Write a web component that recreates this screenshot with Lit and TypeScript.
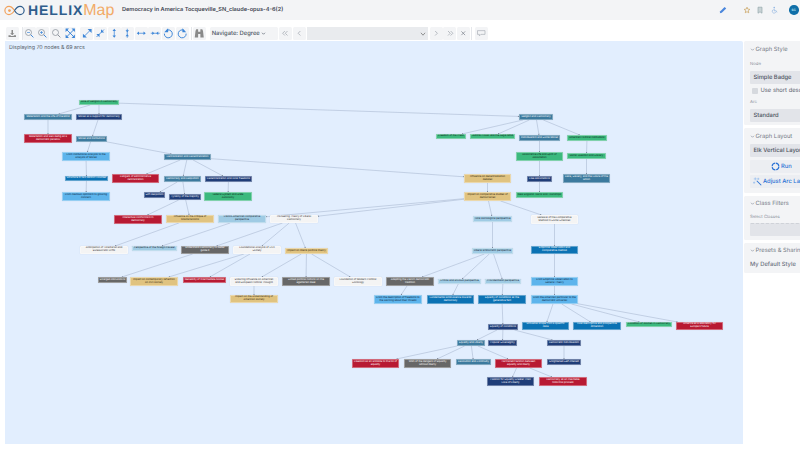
import { LitElement, html, css, svg } from "lit";
import { customElement } from "lit/decorators.js";

type Kind = "g" | "t" | "n" | "r" | "l" | "b" | "a" | "m" | "d" | "w";
type N = [string, number, number, number, number, Kind, string];

const NODES: N[] = [
  ["root", 79, 100, 119, 105, "g", "Role of Religion in Democracy"],
  ["matlife", 24, 114, 72, 120, "t", "Materialism and the Life of the Mind"],
  ["moressup", 76, 114, 122, 120, "n", "Mores as a support for democracy"],
  ["matpar", 24, 134, 72, 143, "r", "Materialism and well-being as a\ndemocratic paradox"],
  ["moresinst", 76, 136, 107, 142, "t", "Mores and Institutions"],
  ["frominst", 62, 152, 110, 161, "l", "From Institutional Analysis to the\nAnalysis of Mores"],
  ["central", 164, 154, 211, 160, "t", "Centralization and Decentralization"],
  ["dangers", 112, 174, 159, 183, "r", "Dangers of administrative\ncentralization"],
  ["despot", 164, 176, 201, 182, "t", "Democracy and Despotism"],
  ["decentral", 205, 176, 252, 182, "n", "Decentralization and local freedoms"],
  ["structure", 65, 176, 108, 181, "b", "Structure in two distinct volumes"],
  ["cautious", 62, 192, 110, 201, "l", "From cautious optimism to growing\nconcern"],
  ["soft", 144, 192, 165, 198, "n", "Soft despotism"],
  ["tyranny", 169, 194, 201, 200, "n", "Tyranny of the majority"],
  ["federal", 204, 192, 252, 201, "g", "Federal System and State\nAutonomy"],
  ["intell", 114, 215, 162, 224, "r", "Intellectual conformism in\ndemocracy"],
  ["critique", 166, 215, 214, 223, "a", "Influence on the critique of\ntotalitarianisms"],
  ["franco", 218, 215, 266, 223, "m", "Franco-American comparative\nperspective"],
  ["pioneer", 270, 215, 318, 223, "w", "Pioneering Theory of Liberal\nDemocracy"],
  ["anticip", 80, 246, 128, 254, "w", "Anticipation of Totalitarian and\nBureaucratic Drifts"],
  ["foreign", 132, 246, 177, 251, "m", "Perspective of the foreign traveler"],
  ["understand", 181, 246, 229, 254, "d", "Understand Democracy to better\nguide it"],
  ["foundational", 233, 246, 281, 254, "w", "Foundational Analysis of Civil\nSociety"],
  ["impliberal", 285, 248, 328, 254, "a", "Impact on liberal political theory"],
  ["enlarged", 98, 277, 127, 283, "d", "Enlarged discussions"],
  ["impcontemp", 130, 277, 178, 286, "a", "Impact on contemporary reflection\non civil society"],
  ["necessity", 183, 277, 226, 283, "r", "Necessity of intermediate bodies"],
  ["enduring", 230, 277, 278, 286, "w", "Enduring Influence on American\nand European Political Thought"],
  ["skilled", 282, 277, 330, 286, "d", "Skilled political notions on the\negalitarian ideal"],
  ["modern", 334, 277, 382, 286, "w", "Foundation of Modern Political\nSociology"],
  ["impunder", 230, 295, 278, 303, "a", "Impact on the understanding of\nAmerican society"],
  ["religion", 519, 114, 553, 120, "t", "Religion and Democracy"],
  ["press", 436, 134, 466, 139, "g", "Freedom of the Press"],
  ["judicial", 470, 134, 515, 139, "g", "Judicial Power and the Legal Mind"],
  ["individ", 519, 135, 560, 141, "t", "Individualism and Social Mores"],
  ["ampol", 567, 135, 607, 141, "g", "American Political Institutions"],
  ["assoc", 516, 152, 563, 161, "g", "Associative Life and Spirit of\nAssociation"],
  ["racial", 567, 153, 606, 159, "g", "Racial Question and Slavery"],
  ["free", 527, 176, 552, 182, "n", "Free associations"],
  ["race", 563, 174, 610, 183, "t", "Race, Slavery, and the Future of the\nUnion"],
  ["infdec", 464, 174, 511, 183, "a", "Influence on decentralization\ndebates"],
  ["newengland", 516, 192, 563, 198, "g", "New England Towns and Townships"],
  ["impcomp", 464, 192, 511, 201, "a", "Impact on comparative studies of\ndemocracies"],
  ["total", 473, 216, 512, 222, "m", "Total sociological perspective"],
  ["renewal", 531, 215, 578, 224, "w", "Renewal of the Comparative\nMethod in Social Sciences"],
  ["empirical", 531, 246, 578, 254, "b", "Empirical observation and\ncomparative method"],
  ["liberal", 472, 248, 513, 254, "m", "Liberal aristocratic perspective"],
  ["adapting", 386, 277, 434, 286, "d", "Adapting the French democratic\ntradition"],
  ["critical", 438, 279, 481, 284, "m", "Critical and anxious perspective"],
  ["provid", 485, 279, 521, 284, "m", "Providentialist perspective"],
  ["fromemp", 531, 277, 578, 286, "l", "From Empirical Observation to\nGeneral Theory"],
  ["fromdesc", 374, 295, 422, 304, "l", "From the description of freedoms to\nthe warning about their threats"],
  ["fundam", 427, 295, 474, 304, "b", "Fundamental ambivalence towards\ndemocracy"],
  ["generative", 478, 295, 526, 304, "b", "Equality of conditions as the\ngenerative fact"],
  ["fromam", 531, 295, 578, 304, "l", "From the American particular to the\ndemocratic universal"],
  ["eqcond", 488, 324, 518, 330, "n", "Equality of conditions"],
  ["universal", 522, 322, 569, 330, "b", "Universal scope from a specific\ncase"],
  ["dual", 573, 322, 621, 330, "b", "Dual descriptive and prospective\ndimension"],
  ["women", 626, 322, 672, 327, "g", "Condition of Women in Democracy"],
  ["america", 676, 322, 723, 330, "r", "America as a laboratory for\nEurope's future"],
  ["eqlib", 457, 340, 485, 346, "t", "Equality and Liberty"],
  ["popular", 488, 340, 517, 346, "n", "Popular Sovereignty"],
  ["demind", 547, 340, 581, 346, "n", "Democratic individualism"],
  ["antidote", 352, 359, 399, 368, "r", "Freedom as an antidote to the ills of\nequality"],
  ["wish", 404, 359, 451, 368, "d", "Wish of the dangers of equality\nwithout liberty"],
  ["revol", 456, 359, 491, 365, "t", "Revolution and Continuity"],
  ["tension", 495, 359, 542, 368, "r", "Permanent tension between\nequality and liberty"],
  ["selfint", 547, 359, 581, 365, "n", "Enlightened Self-Interest"],
  ["passion", 487, 377, 534, 386, "n", "Passion for Equality Greater Than\nLove of Liberty"],
  ["inevit", 539, 377, 587, 386, "r", "Democracy as an inevitable\nhistorical process"],
];

const EDGES: [string, string][] = [
  ["root", "matlife"], ["root", "moressup"], ["root", "religion"], ["matlife", "matpar"],
  ["moressup", "moresinst"], ["moresinst", "frominst"], ["moresinst", "central"],
  ["frominst", "structure"], ["structure", "cautious"], ["central", "dangers"],
  ["central", "despot"], ["central", "decentral"], ["central", "infdec"], ["despot", "soft"],
  ["despot", "tyranny"], ["decentral", "federal"], ["tyranny", "intell"], ["tyranny", "critique"],
  ["infdec", "impcomp"], ["impcomp", "franco"], ["impcomp", "pioneer"], ["impcomp", "total"],
  ["impcomp", "renewal"], ["critique", "anticip"], ["franco", "foreign"], ["pioneer", "understand"],
  ["pioneer", "foundational"], ["pioneer", "impliberal"], ["understand", "enlarged"],
  ["foundational", "impcontemp"], ["foundational", "necessity"], ["impliberal", "enduring"],
  ["impliberal", "skilled"], ["impliberal", "modern"], ["enduring", "impunder"],
  ["total", "liberal"], ["liberal", "adapting"], ["liberal", "critical"], ["liberal", "provid"],
  ["adapting", "fromdesc"], ["critical", "fundam"], ["provid", "generative"], ["generative", "eqcond"],
  ["renewal", "empirical"], ["empirical", "fromemp"], ["fromemp", "fromam"], ["fromam", "universal"],
  ["fromam", "dual"], ["fromam", "women"], ["fromam", "america"], ["eqcond", "eqlib"],
  ["eqcond", "popular"], ["eqcond", "demind"], ["eqlib", "antidote"], ["eqlib", "wish"],
  ["eqlib", "revol"], ["eqlib", "tension"], ["demind", "selfint"], ["tension", "passion"],
  ["tension", "inevit"], ["religion", "press"], ["religion", "judicial"], ["religion", "individ"],
  ["religion", "ampol"], ["individ", "assoc"], ["assoc", "free"], ["free", "newengland"],
  ["ampol", "racial"], ["racial", "race"],
];

const CANVAS_X = 5;
const CANVAS_Y = 41;
const byId = new Map(NODES.map((n) => [n[0], n]));

function clipPoint(from: N, to: N): [number, number] {
  const cx = (to[1] + to[3]) / 2, cy = (to[2] + to[4]) / 2;
  const fx = (from[1] + from[3]) / 2, fy = (from[2] + from[4]) / 2;
  const dx = fx - cx, dy = fy - cy;
  const hw = (to[3] - to[1]) / 2, hh = (to[4] - to[2]) / 2;
  const t = Math.min(dx ? hw / Math.abs(dx) : 9e9, dy ? hh / Math.abs(dy) : 9e9);
  return [cx + dx * t, cy + dy * t];
}

const BLUE = "#3d86d8";
const IC: Record<string, any> = {
  download: svg`<path d="M6 2.500h2v4.500h1.800L7 9.500 4.200 7H6z" fill="#8a8a8a"/><path d="M2 9.500h2.500l1 1.200h3l1-1.200H12v2.500H2z" fill="#8a8a8a"/>`,
  zoomout: svg`<circle cx="6" cy="6" r="4" fill="none" stroke="#8a9099" stroke-width="1"/><path d="M9 9l3.500 3.500" stroke=${BLUE} stroke-width="1.300"/><path d="M4 6h4" stroke=${BLUE} stroke-width=".9"/>`,
  zoomin: svg`<circle cx="6" cy="6" r="4" fill="none" stroke="#8a9099" stroke-width="1"/><path d="M9 9l3.500 3.500" stroke=${BLUE} stroke-width="1.300"/><path d="M4 6h4M6 4v4" stroke=${BLUE} stroke-width=".9"/>`,
  zoomfit: svg`<circle cx="6" cy="6" r="4" fill="none" stroke="#8a9099" stroke-width="1"/><path d="M9 9l3.500 3.500" stroke="#8a9099" stroke-width="1.300"/>`,
  fit: svg`<path d="M2 2l10 10M12 2L2 12" stroke=${BLUE} stroke-width="1.300"/><path d="M.8 .8h4.500L.8 5.300zM13.200 .8v4.500L8.700 .8zM.8 13.200V8.700l4.500 4.500zM13.200 13.200H8.700l4.500-4.500z" fill=${BLUE}/>`,
  expanddiag: svg`<path d="M2.500 11.500l9-9" stroke=${BLUE} stroke-width="1.100"/><path d="M7.500 1.200h5.300v5.300zM1.200 7.500v5.300h5.300z" fill=${BLUE}/>`,
  shrinkdiag: svg`<path d="M2 12L12 2" stroke=${BLUE} stroke-width="1.100"/><path d="M8 1.800v4.200h4.200zM1.800 8H6v4.200z" fill=${BLUE}/>`,
  expandv: svg`<path d="M7 3v8" stroke=${BLUE} stroke-width="1"/><path d="M7 1L9.300 4H4.700zM7 13l2.300-3H4.700z" fill=${BLUE}/>`,
  shrinkv: svg`<path d="M7 1v12" stroke=${BLUE} stroke-width="1"/><path d="M7 5.800L9.300 3H4.700zM7 8.200L9.300 11H4.700z" fill=${BLUE}/>`,
  expandh: svg`<path d="M3 7h8" stroke=${BLUE} stroke-width="1"/><path d="M1 7l3-2.300v4.600zM13 7l-3-2.300v4.600z" fill=${BLUE}/>`,
  shrinkh: svg`<path d="M1 7h12" stroke=${BLUE} stroke-width="1"/><path d="M5.800 7L3 4.700v4.600zM8.200 7L11 4.700v4.600z" fill=${BLUE}/>`,
  ccw: svg`<path d="M4.300 3.300A5.300 5.300 0 1 1 1.800 7.500" fill="none" stroke=${BLUE} stroke-width="1.300"/><path d="M6.800 .2v5.300H1.700z" fill=${BLUE}/>`,
  cw: svg`<path d="M9.700 3.300A5.300 5.300 0 1 0 12.200 7.500" fill="none" stroke=${BLUE} stroke-width="1.300"/><path d="M7.200 .2v5.300h5.100z" fill=${BLUE}/>`,
  binoculars: svg`<path d="M2 4l1-2.500h2.500V5h3V1.500H11l1 2.500 1 8.500H8.500V8h-3v4.500H1z" fill="#8a8a8a"/>`,
  dleft: svg`<path d="M6.500 4L3.500 7l3 3M10 4L7 7l3 3" fill="none" stroke="#9aa0a8" stroke-width=".9"/>`,
  left: svg`<path d="M8.500 4l-3 3 3 3" fill="none" stroke="#9aa0a8" stroke-width=".9"/>`,
  right: svg`<path d="M5.500 4l3 3-3 3" fill="none" stroke="#9aa0a8" stroke-width=".9"/>`,
  dright: svg`<path d="M4 4l3 3-3 3M7.500 4l3 3-3 3" fill="none" stroke="#9aa0a8" stroke-width=".9"/>`,
  close: svg`<path d="M4.500 4.500l5 5M9.500 4.500l-5 5" stroke="#80868f" stroke-width="1"/>`,
  comment: svg`<path d="M2 3.500h10v5H6.500L4.500 10.500v-2H2z" fill="none" stroke="#a0a5ad" stroke-width=".8"/>`,
};

@customElement("app-root")
export class AppRoot extends LitElement {
  static styles = css`
    :host { display: block; width: 800px; height: 450px; overflow: hidden; background: #fff; font-family: Inter, "Liberation Sans", sans-serif; color: #374151; text-rendering: geometricPrecision; }
    .top { height: 20px; background: #f3f4f6; display: flex; align-items: center; }
    .logo { display: flex; align-items: center; padding-left: 3px; width: 119px; flex: none; box-sizing: border-box; }
    .logo svg { width: 23px; height: 11px; flex: none; }
    .brand { font-family: "Liberation Sans", sans-serif; font-size: 14px; font-weight: 700; color: #2f5d8c; letter-spacing: .9px; margin-left: 2px; line-height: 20px; }
    .brand2 { font-family: "Liberation Sans", sans-serif; font-size: 16px; color: #f2ab68; line-height: 20px; margin-top: 1px; }
    .title { font-size: 5.600px; font-weight: 600; color: #3f4653; white-space: nowrap; margin-left: 3px; }
    .spacer { flex: 1; }
    .hicons { display: flex; align-items: center; }
    .hicons svg { width: 8px; height: 8px; display: block; }
    .pencil { margin-right: 16px; }
    .star { margin-right: 5px; }
    .book { margin-right: 7px; }
    .acc { margin-right: 10px; }
    .avatar { width: 9.500px; height: 9.500px; border-radius: 50%; background: #0f6ea8; color: #dff; font-size: 3.200px; display: flex; align-items: center; justify-content: center; margin-right: 1.500px; font-weight: 600; }
    .bar { height: 21px; box-sizing: border-box; padding: 7px 0 0 6px; display: flex; align-items: flex-start; }
    .btn { width: 13px; height: 13px; background: #f3f4f6; border-radius: 1.500px; display: flex; align-items: center; justify-content: center; margin-right: .64px; flex: none; }
    .btn svg { width: 10.500px; height: 10.500px; }
    .sep { width: .6px; height: 13px; background: #e5e7eb; flex: none; }
    .s1 { margin: 0 .4px 0 2px; }
    .s2 { margin: 0 1.800px 0 1.500px; }
    .s3 { margin: 0 3px 0 .5px; }
    .grp { width: 3.200px; flex: none; }
    .nav { width: 68px; height: 13px; background: #f3f4f6; margin: 0 1px 0 3.400px; font-size: 5.800px; font-weight: 500; color: #4b5563; display: flex; align-items: center; padding-left: 1.500px; box-sizing: border-box; white-space: nowrap; border-radius: 1.500px; flex: none; }
    .chev { width: 5px; height: 5px; margin-left: 1px; }
    .search { width: 121px; height: 13px; background: #e9ebee; display: flex; align-items: center; justify-content: flex-end; padding-right: 2px; box-sizing: border-box; margin: 0 2px 0 .4px; flex: none; }
    .main { height: 409px; display: flex; padding-left: 5px; }
    .canvas { position: relative; width: 738px; height: 403px; background: #e2eefe; border-radius: 0 2px 0 0; flex: none; overflow: hidden; }
    .info { font-size: 5.300px; color: #555c68; padding: 4px 0 0 4px; }
    .edges { position: absolute; left: 0; top: 0; width: 738px; height: 403px; }
    .node { position: absolute; box-sizing: border-box; display: flex; align-items: center; justify-content: center; text-align: center; white-space: pre; font-size: 2.550px; line-height: 1.150; border: .4px solid rgba(255,255,255,.35); border-radius: .4px; box-shadow: 0 0 .8px rgba(120,130,150,.45); }
    .g { background: #3cb97e; color: #0c2a1b; }
    .t { background: #3c7a9e; color: #fff; }
    .n { background: #1f3d78; color: #fff; }
    .r { background: #b81a33; color: #fff; }
    .l { background: #5db4ec; color: #0d2438; }
    .b { background: #0b72b4; color: #fff; }
    .a { background: #e0c380; color: #33280f; }
    .m { background: #9fcbe4; color: #14242e; }
    .d { background: #676767; color: #fff; }
    .w { background: #f4f4f4; color: #333; }
    .side { margin-left: 1px; width: 120px; flex: none; display: flex; flex-direction: column; gap: 3px; }
    .panel { background: #f3f4f6; border-radius: 1.500px; padding: 0 6px; box-sizing: border-box; flex: none; }
    .head { display: flex; align-items: center; font-size: 5.800px; color: #747b87; height: 14px; white-space: nowrap; }
    .head svg { width: 5px; height: 5px; margin-right: .5px; }
    .lab { font-size: 4.300px; color: #8a909a; line-height: 6px; }
    .sel { height: 12.500px; background: #e2e4e9; border-radius: 1px; font-size: 5.800px; font-weight: 500; color: #4b5260; display: flex; align-items: center; padding-left: 3.500px; white-space: nowrap; }
    .check { display: flex; align-items: center; font-size: 5.800px; color: #5b6270; height: 12px; padding-left: 1.500px; margin-top: 1px; white-space: nowrap; gap: 3px; }
    .box { width: 6px; height: 6px; background: #d6d9de; border-radius: 1px; flex: none; }
    .act { height: 13px; background: #eceef2; border-radius: 1px; display: flex; align-items: center; color: #2b73d6; font-size: 5.800px; font-weight: 500; white-space: nowrap; }
    .run { margin-top: 3px; padding-left: 21px; gap: 1px; }
    .adj { margin-top: 2px; padding-left: 3px; gap: 1px; }
    .p1 { height: 84px; }
    .p2 { height: 65px; }
    .p3 { height: 44px; }
    .p4 { height: 30px; }
    .p1 .head { height: 17px; margin-bottom: 4px; }
    .p1 .lab { margin-bottom: 3px; }
    .p1 .arc { margin-top: 3.500px; }
    .p2 .head { height: 16px; }
    .p2 .sel { height: 13px; }
    .p3 .head { height: 14px; }
    .p3 .lab { margin: 5px 0 2px; }
    .p3 .sel { height: 13px; border-top: .5px dashed #cfd2d8; box-sizing: border-box; }
    .p4 .head { height: 14px; }
    .def { font-size: 5.800px; color: #6b7280; white-space: nowrap; margin-top: 4px; font-weight: 500; }
    .run svg { width: 9px; height: 9px; }
    .adj svg { width: 9px; height: 9px; }
  `;

  private btn(k: string) {
    return html`<div class="btn"><svg viewBox="0 0 14 14">${IC[k]}</svg></div>`;
  }

  private chevron() {
    return html`<svg viewBox="0 0 10 10"><path d="M2 3.500l3 3 3-3" fill="none" stroke="#7b8290" stroke-width="1.200"/></svg>`;
  }

  private edges() {
    return svg`${EDGES.map(([a, b]) => {
      const f = byId.get(a)!, t = byId.get(b)!;
      const [x2, y2] = clipPoint(f, t);
      const [x1, y1] = clipPoint(t, f);
      const X1 = x1 - CANVAS_X, Y1 = y1 - CANVAS_Y, X2 = x2 - CANVAS_X, Y2 = y2 - CANVAS_Y;
      const ang = Math.atan2(Y2 - Y1, X2 - X1);
      const s = 1.2;
      const pts = [
        [X2, Y2],
        [X2 - s * Math.cos(ang - 0.5), Y2 - s * Math.sin(ang - 0.5)],
        [X2 - s * Math.cos(ang + 0.5), Y2 - s * Math.sin(ang + 0.5)],
      ].map((p) => p.map((v) => v.toFixed(2)).join(",")).join(" ");
      return svg`<line x1=${X1} y1=${Y1} x2=${X2} y2=${Y2} stroke="#b3c2d8" stroke-width=".7"/><polygon points=${pts} fill="#4b5563"/>`;
    })}`;
  }

  render() {
    return html`
      <div class="top">
        <div class="logo">
          <svg viewBox="0 0 24 12">
            <path d="M12 6C10 3 8 1.500 6 1.500a4.500 4.500 0 0 0 0 9c2 0 4-1.500 6-4.500" fill="none" stroke="#f2a25c" stroke-width="1.300"/>
            <path d="M12 6c2-3 4-4.500 6-4.500a4.500 4.500 0 0 1 0 9c-2 0-4-1.500-6-4.500" fill="none" stroke="#2f5d8c" stroke-width="1.300"/>
            <circle cx="6.500" cy="6" r="1.500" fill="#f2a25c"/>
          </svg>
          <span class="brand">HELLIX</span><span class="brand2">Map</span>
        </div>
        <div class="title">Democracy in America Tocqueville_SN_claude-opus-4-6(2)</div>
        <div class="spacer"></div>
        <div class="hicons">
          <svg class="pencil" viewBox="0 0 10 10"><path d="M1 9l.6-2.500L7 1.200l2 2L3.500 8.500z" fill="#4a86dc"/></svg>
          <svg class="star" viewBox="0 0 10 10"><path d="M5 1.500l1 2.400 2.600.3-2 1.700.6 2.600L5 7.100 2.800 8.500l.6-2.600-2-1.700 2.600-.3z" fill="none" stroke="#c9a25e" stroke-width=".9"/></svg>
          <svg class="book" viewBox="0 0 10 10"><path d="M2.500 1.500h5v7.500L5 7.300 2.500 9z" fill="#c9d3d6" stroke="#8fa3a8" stroke-width=".8"/></svg>
          <svg class="acc" viewBox="0 0 10 10"><circle cx="4" cy="2" r="1" fill="#8db4e2"/><path d="M4 3.500v2.500h2.500l1 2" fill="none" stroke="#8db4e2" stroke-width=".9"/><path d="M3 4.500a2.300 2.300 0 1 0 3 3" fill="none" stroke="#8db4e2" stroke-width=".8"/></svg>
          <div class="avatar">SC</div>
        </div>
      </div>
      <div class="bar">
        ${this.btn("download")}
        <div class="sep s1"></div>
        ${["zoomout", "zoomin", "zoomfit", "fit"].map((k) => this.btn(k))}
        <div class="grp"></div>
        ${["expanddiag", "shrinkdiag", "expandv", "shrinkv", "expandh", "shrinkh", "ccw", "cw"].map((k) => this.btn(k))}
        <div class="sep s2"></div>
        ${this.btn("binoculars")}
        <div class="nav">Navigate: Degree <svg class="chev" viewBox="0 0 10 10"><path d="M2 3.500l3 3 3-3" fill="none" stroke="#4b5563" stroke-width="1.300"/></svg></div>
        ${this.btn("dleft")}${this.btn("left")}
        <div class="search"><svg width="6" height="6" viewBox="0 0 10 10"><path d="M1.500 3l3.500 4 3.500-4" fill="none" stroke="#777" stroke-width="1.300"/></svg></div>
        ${this.btn("right")}${this.btn("dright")}${this.btn("close")}
        <div class="sep s3"></div>
        ${this.btn("comment")}
      </div>
      <div class="main">
        <div class="canvas">
          <div class="info">Displaying 70 nodes &amp; 69 arcs</div>
          <svg class="edges" viewBox="0 0 738 403">${this.edges()}</svg>
          ${NODES.map((n) => html`<div class="node ${n[5]}" style="left:${n[1] - CANVAS_X}px;top:${n[2] - CANVAS_Y}px;width:${n[3] - n[1]}px;height:${n[4] - n[2]}px">${n[6]}</div>`)}
        </div>
        <div class="side">
          <div class="panel p1">
            <div class="head">${this.chevron()}Graph Style</div>
            <div class="lab">Node</div>
            <div class="sel">Simple Badge</div>
            <div class="check"><span class="box"></span>Use short descriptions</div>
            <div class="lab arc">Arc</div>
            <div class="sel">Standard</div>
          </div>
          <div class="panel p2">
            <div class="head">${this.chevron()}Graph Layout</div>
            <div class="sel">Elk Vertical Layout</div>
            <div class="act run"><svg viewBox="0 0 12 12"><circle cx="6" cy="6" r="4.500" fill="none" stroke="#2b73d6" stroke-width="1.500" stroke-dasharray="6 1"/></svg>Run</div>
            <div class="act adj"><svg viewBox="0 0 12 12"><path d="M5 5l6 6" stroke="#2b73d6" stroke-width="1.400"/><path d="M3 .5v4M1 2.500h4M7 1v3M5.500 2.500h3M1.500 6v3M0 7.500h3" stroke="#7fb0ee" stroke-width=".7"/></svg>Adjust Arc Labels</div>
          </div>
          <div class="panel p3">
            <div class="head">${this.chevron()}Class Filters</div>
            <div class="lab">Select Classes</div>
            <div class="sel"></div>
          </div>
          <div class="panel p4">
            <div class="head">${this.chevron()}Presets &amp; Sharing</div>
            <div class="def">My Default Style</div>
          </div>
        </div>
      </div>
    `;
  }
}
